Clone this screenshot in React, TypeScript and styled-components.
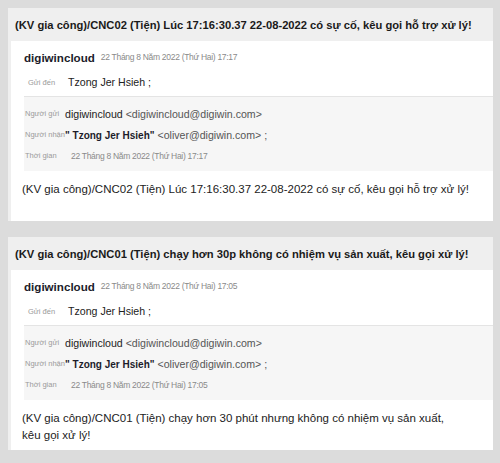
import styled, { createGlobalStyle } from "styled-components";

const GlobalStyle = createGlobalStyle`
  html, body {
    margin: 0;
    padding: 0;
    background: #dcdcdc;
    font-family: "Liberation Sans", Arial, sans-serif;
  }
`;

type Mail = {
  subject: string;
  time: string;
  body: string;
};

const mails: Mail[] = [
  {
    subject:
      "(KV gia công)/CNC02 (Tiện) Lúc 17:16:30.37 22-08-2022 có sự cố, kêu gọi hỗ trợ xử lý!",
    time: "22 Tháng 8 Năm 2022 (Thứ Hai) 17:17",
    body: "(KV gia công)/CNC02 (Tiện) Lúc 17:16:30.37 22-08-2022 có sự cố, kêu gọi hỗ trợ xử lý!",
  },
  {
    subject:
      "(KV gia công)/CNC01 (Tiện) chạy hơn 30p không có nhiệm vụ sản xuất, kêu gọi xử lý!",
    time: "22 Tháng 8 Năm 2022 (Thứ Hai) 17:05",
    body: "(KV gia công)/CNC01 (Tiện) chạy hơn 30 phút nhưng không có nhiệm vụ sản xuất,\nkêu gọi xử lý!",
  },
];

const App = () => (
  <>
    <GlobalStyle />
    <Page>
      {mails.map((m, i) => (
        <Card key={i}>
          <Subject>{m.subject}</Subject>
          <Body>
            <SenderRow>
              <SenderName>digiwincloud</SenderName>
              <SmallDate>{m.time}</SmallDate>
            </SenderRow>
            <ToRow>
              <Label $indent={4}>Gửi đến</Label>
              <Value>Tzong Jer Hsieh ;</Value>
            </ToRow>
            <InfoBox>
              <InfoRow>
                <Label $indent={1}>Người gửi</Label>
                <Value>
                  digiwincloud <Addr>&lt;digiwincloud@digiwin.com&gt;</Addr>
                </Value>
              </InfoRow>
              <InfoRow>
                <Label $indent={1}>Người nhận</Label>
                <Value>
                  <b>" Tzong Jer Hsieh"</b> <Addr>&lt;oliver@digiwin.com&gt; ;</Addr>
                </Value>
              </InfoRow>
              <InfoRow>
                <Label $indent={1}>Thời gian</Label>
                <SmallDate $pad={6}>{m.time}</SmallDate>
              </InfoRow>
            </InfoBox>
            <Message>{m.body}</Message>
          </Body>
        </Card>
      ))}
    </Page>
  </>
);

export default App;

const Page = styled.div`
  display: flex;
  flex-direction: column;
  gap: 16px;
  padding: 8px 7px 8px 8px;
`;

const Card = styled.div`
  display: flex;
  flex-direction: column;
  background: #efefef;
`;

const Subject = styled.div`
  height: 33px;
  display: flex;
  align-items: center;
  padding-left: 7px;
  font-size: 11.2px;
  font-weight: bold;
  color: #1a1a1a;
  white-space: nowrap;
`;

const Body = styled.div`
  background: #fff;
  margin-left: 3px;
  padding-left: 13px;
  display: flex;
  flex-direction: column;
`;

const SenderRow = styled.div`
  height: 20px;
  margin-top: 6px;
  display: flex;
  align-items: center;
  gap: 6px;
`;

const SenderName = styled.span`
  font-size: 11.6px;
  font-weight: bold;
  color: #1c1c2a;
`;

const SmallDate = styled.span<{ $pad?: number }>`
  font-size: 8.5px;
  color: #8a8a8a;
  letter-spacing: -0.3px;
  padding-left: ${(p) => p.$pad ?? 0}px;
`;

const ToRow = styled.div`
  height: 20px;
  margin-top: 5px;
  display: flex;
  align-items: center;
`;

const Label = styled.span<{ $indent: number }>`
  width: 40px;
  flex-shrink: 0;
  padding-left: ${(p) => p.$indent}px;
  font-size: 7.5px;
  color: #9a9a9a;
`;

const Value = styled.span`
  font-size: 10.6px;
  color: #222;
  white-space: nowrap;
  b {
    font-size: 10px;
    font-weight: bold;
    color: #1c1c2a;
  }
`;

const Addr = styled.span`
  color: #555;
`;

const InfoBox = styled.div`
  margin-top: 4px;
  background: #f6f6f6;
  border-top: 1px solid #e4e4e4;
  padding: 6px 0 5px;
  display: flex;
  flex-direction: column;
`;

const InfoRow = styled.div`
  height: 21px;
  display: flex;
  align-items: center;
`;

const Message = styled.div`
  box-sizing: border-box;
  min-height: 50px;
  padding: 10px 10px 0 0;
  margin-left: -2px;
  font-size: 11.5px;
  line-height: 17px;
  color: #222;
  white-space: pre-line;
`;
